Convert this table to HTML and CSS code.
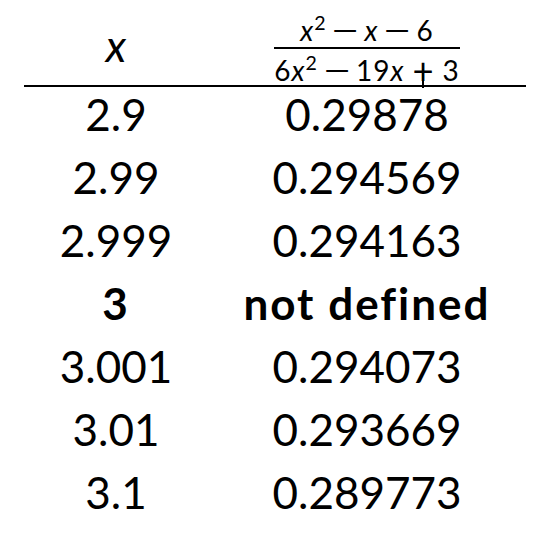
FILE: index.html
```html
<!DOCTYPE html>
<html lang="en">
<head>
    <meta charset="UTF-8">
    <meta name="viewport" content="width=device-width, initial-scale=1.0">
    <title>Values near x = 3</title>
    <link rel="stylesheet" href="styles.css">
</head>
<body>
    <div class="table">
        <div class="row head">
            <div class="cell var">x</div>
            <div class="cell expr">
                <span class="frac">
                    <span class="num"><i>x</i><sup>2</sup><span class="op"><span class="sign">−</span></span><i>x</i><span class="op"><span class="sign">−</span></span>6</span>
                    <span class="den">6<i>x</i><sup>2</sup><span class="op"><span class="sign">−</span></span>19<i>x</i><span class="op plus"><span class="sign">+</span></span>3</span>
                </span>
            </div>
        </div>
        <div class="row"><div class="cell">2.9</div><div class="cell">0.29878</div></div>
        <div class="row"><div class="cell">2.99</div><div class="cell">0.294569</div></div>
        <div class="row"><div class="cell">2.999</div><div class="cell">0.294163</div></div>
        <div class="row bold"><div class="cell">3</div><div class="cell">not defined</div></div>
        <div class="row"><div class="cell">3.001</div><div class="cell">0.294073</div></div>
        <div class="row"><div class="cell">3.01</div><div class="cell">0.293669</div></div>
        <div class="row"><div class="cell">3.1</div><div class="cell">0.289773</div></div>
    </div>
</body>
</html>
```

FILE: styles.css
```css
body {
    margin: 0;
    background-color: #fff;
    color: #000;
    font-family: Lato, "Open Sans", sans-serif;
}
.table {
    width: 502px;
    margin-left: 24px;
}
.row {
    display: grid;
    grid-template-columns: 184px 1fr;
    text-align: center;
    font-size: 44px;
    line-height: 54px;
    padding-bottom: 9px;
}
.row.bold {
    font-weight: 700;
    letter-spacing: 2px;
}
.head {
    height: 85px;
    padding-bottom: 0;
    border-bottom: 2px solid #000;
    align-items: end;
}
.var {
    font-style: italic;
    line-height: 44px;
    padding-bottom: 18px;
}
.expr {
    line-height: 0;
}
.frac {
    display: inline-flex;
    flex-direction: column;
    font-size: 28px;
    line-height: 26px;
    letter-spacing: 1px;
    padding-bottom: 2px;
}
.num {
    padding-bottom: 4px;
    border-bottom: 2px solid #000;
}
.den {
    padding-top: 8px;
}
.frac i {
    font-style: italic;
}
sup {
    font-size: 0.7em;
    line-height: 0;
    vertical-align: 0.55em;
}
.op {
    display: inline-block;
    width: 38px;
    text-align: center;
    letter-spacing: 0;
}
.sign {
    display: inline-block;
    transform: scaleX(1.8);
}
.plus {
    position: relative;
}
.plus .sign {
    transform: scale(1.3);
}
.plus::after {
    content: "";
    position: absolute;
    left: 50%;
    top: 12px;
    width: 2px;
    height: 19px;
    margin-left: -1px;
    background-color: #000;
}
```
